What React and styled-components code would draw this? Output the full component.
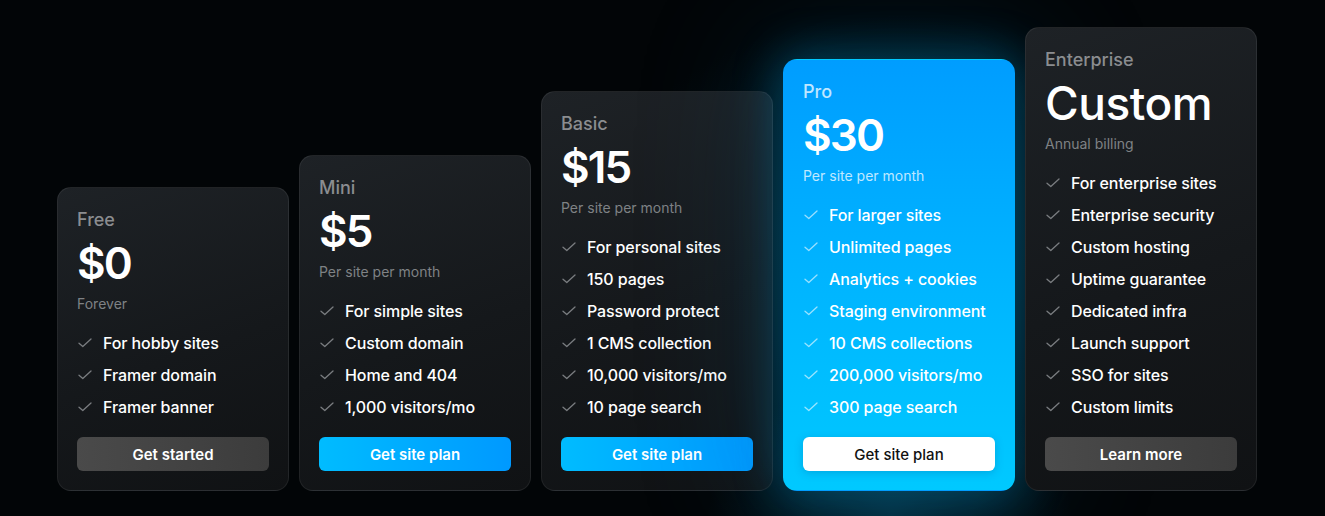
import React from 'react'
import styled, { createGlobalStyle, css } from 'styled-components'

const Global = createGlobalStyle`
    html, body {
        margin: 0;
        padding: 0;
        background: #020507;
    }
    * { box-sizing: border-box; }
`

const Page = styled.div`
    width: 1325px;
    height: 516px;
    overflow: hidden;
    font-family: Inter, "Noto Sans", sans-serif;
    background:
        radial-gradient(ellipse 260px 200px at 890px 516px, rgba(10, 90, 120, 0.4), transparent 70%),
        radial-gradient(ellipse 420px 300px at 900px 240px, rgba(8, 60, 80, 0.35), transparent 75%),
        #020507;
    display: flex;
    align-items: flex-end;
    padding: 0 0 25px 57px;
`

const Row = styled.div`
    display: flex;
    align-items: flex-end;
    gap: 10px;
`

const Card = styled.div`
    width: 232px;
    display: flex;
    flex-direction: column;
    padding: 19px;
    border-radius: 14px;
    border: 1px solid rgba(255, 255, 255, 0.07);
    background: linear-gradient(160deg, #1e2226 0%, #15181b 55%, #101214 100%);
    color: #fff;
    ${p => p.$pro && css`
        border-color: transparent;
        background: linear-gradient(180deg, #009dff 0%, #00b4ff 50%, #00c9ff 100%);
        box-shadow: 0 0 45px 6px rgba(0, 160, 220, 0.32), 0 0 130px 24px rgba(0, 110, 160, 0.18);
    `}
`

const Title = styled.div`
    font-size: 18px;
    line-height: 26px;
    font-weight: 500;
    color: ${p => p.$pro ? 'rgba(255,255,255,0.75)' : '#8b8d90'};
`

const Price = styled.div`
    margin-top: 4px;
    font-size: ${p => p.$big ? '46px' : '44px'};
    line-height: 52px;
    font-weight: ${p => p.$big ? 500 : 600};
    letter-spacing: ${p => p.$big ? '-0.5px' : '-1.8px'};
`

const Sub = styled.div`
    margin-top: 5px;
    font-size: 14px;
    line-height: 20px;
    color: ${p => p.$pro ? 'rgba(255,255,255,0.75)' : '#7f8285'};
`

const List = styled.ul`
    list-style: none;
    margin: 13px 0 0;
    padding: 0;
`

const Item = styled.li`
    height: 32px;
    display: flex;
    align-items: center;
    gap: 11px;
    font-size: 16px;
    font-weight: 500;
    letter-spacing: -0.1px;
    color: #fff;
    svg { flex: none; margin-left: 1px; }
`

const Button = styled.button`
    margin-top: 14px;
    height: 34px;
    border: none;
    border-radius: 6px;
    font-family: inherit;
    font-size: 15px;
    font-weight: 600;
    color: #fff;
    cursor: pointer;
    background: ${p => p.$variant === 'blue'
        ? 'linear-gradient(90deg, #00bcff 0%, #0099ff 100%)'
        : p.$variant === 'white'
            ? '#fff'
            : 'linear-gradient(90deg, #4a4a4a 0%, #3c3c3c 100%)'};
    ${p => p.$variant === 'white' && css`
        color: #111;
        font-weight: 500;
        box-shadow: 0 2px 8px rgba(0, 80, 140, 0.25);
    `}
`

const Check = ({ pro }) => (
    <svg width="14" height="10" viewBox="0 0 14 10" fill="none">
        <path d="M1 5.2 L4.8 8.6 L13 1" stroke={pro ? 'rgba(255,255,255,0.6)' : '#7a7d80'} strokeWidth="1.3" strokeLinecap="round" strokeLinejoin="round" />
    </svg>
)

const plans = [
    { name: 'Free', price: '$0', sub: 'Forever', button: 'Get started', variant: 'gray',
        features: ['For hobby sites', 'Framer domain', 'Framer banner'] },
    { name: 'Mini', price: '$5', sub: 'Per site per month', button: 'Get site plan', variant: 'blue',
        features: ['For simple sites', 'Custom domain', 'Home and 404', '1,000 visitors/mo'] },
    { name: 'Basic', price: '$15', sub: 'Per site per month', button: 'Get site plan', variant: 'blue',
        features: ['For personal sites', '150 pages', 'Password protect', '1 CMS collection', '10,000 visitors/mo', '10 page search'] },
    { name: 'Pro', price: '$30', sub: 'Per site per month', button: 'Get site plan', variant: 'white', pro: true,
        features: ['For larger sites', 'Unlimited pages', 'Analytics + cookies', 'Staging environment', '10 CMS collections', '200,000 visitors/mo', '300 page search'] },
    { name: 'Enterprise', price: 'Custom', sub: 'Annual billing', button: 'Learn more', variant: 'gray', big: true,
        features: ['For enterprise sites', 'Enterprise security', 'Custom hosting', 'Uptime guarantee', 'Dedicated infra', 'Launch support', 'SSO for sites', 'Custom limits'] },
]

const App = () => {
    return (
        <Page>
            <Global />
            <Row>
                {plans.map(plan => (
                    <Card key={plan.name} $pro={plan.pro}>
                        <Title $pro={plan.pro}>{plan.name}</Title>
                        <Price $big={plan.big}>{plan.price}</Price>
                        <Sub $pro={plan.pro}>{plan.sub}</Sub>
                        <List>
                            {plan.features.map(f => (
                                <Item key={f}><Check pro={plan.pro} />{f}</Item>
                            ))}
                        </List>
                        <Button $variant={plan.variant}>{plan.button}</Button>
                    </Card>
                ))}
            </Row>
        </Page>
    )
}

export default App
